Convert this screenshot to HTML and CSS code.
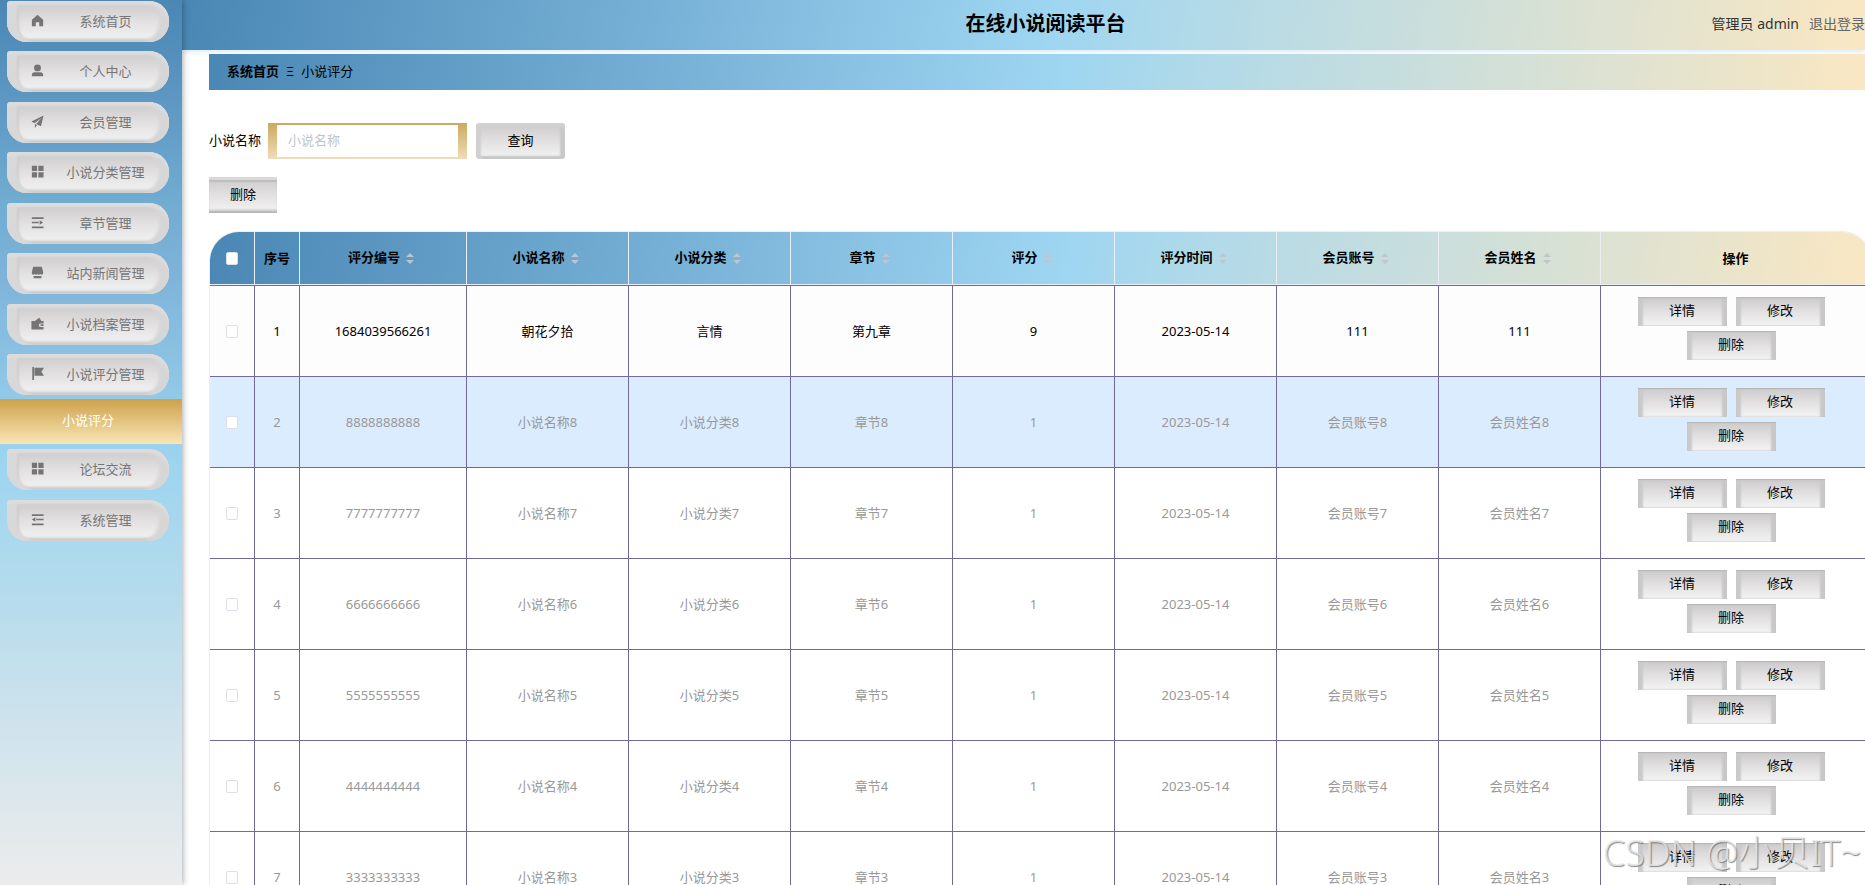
FILE: index.html
```html
<!DOCTYPE html>
<html lang="zh-CN">
<head>
<meta charset="utf-8">
<title>在线小说阅读平台</title>
<link rel="stylesheet" href="styles.css">
</head>
<body>
<div class="app">
  <nav class="sidebar" id="menu"></nav>
  <div class="main">
    <header class="topbar">
      <h1>在线小说阅读平台</h1>
      <div class="user"><span>管理员 admin</span><a href="#">退出登录</a></div>
    </header>
    <main class="content">
      <div class="crumbs"><a href="#">系统首页</a><span class="sep">Ξ</span><span>小说评分</span></div>
      <form class="search">
        <label for="name">小说名称</label>
        <span class="field"><input id="name" type="text" placeholder="小说名称"></span>
        <button class="query" type="button">查询</button>
      </form>
      <button class="bulk" type="button">删除</button>
      <div class="grid">
        <table>
          <colgroup><col class="c-sm"><col class="c-sm"><col class="c-id"><col class="c"><col class="c"><col class="c"><col class="c"><col class="c"><col class="c"><col class="c"><col></colgroup>
          <thead><tr id="head"></tr></thead>
          <tbody id="rows"></tbody>
        </table>
      </div>
    </main>
  </div>
</div>
<div class="watermark">CSDN @小贝IT~</div>
<script src="app.js"></script>
</body>
</html>
```
FILE: app.js
```js
const icons = {
  home: '<path d="M7.500 1 1 6.500V14h4.500V9.500h4V14H14V6.500z"/>',
  user: '<circle cx="7.500" cy="4.500" r="4"/><path d="M1 14v-1.500C1 10.500 2.500 9.500 4 9.500h7c1.500 0 3 1 3 3V14z"/>',
  send: '<path d="M14.500 .5.5 7.500 4 9.500 12 3.500 6 10.500 11.500 13zM4.500 10.500 7 11.500 4.500 15z"/>',
  menu: '<path d="M1 1h6v6H1zM8.500 1h6v6h-6zM1 8.500h6v6H1zM8.500 8.500h6v6h-6z"/>',
  fold: '<path d="M1 1.500h13.500v2H1zM1 6.500h8v2H1zM1 12h13.500v2H1zM10 4.800 14 7.500 10 10.200z"/>',
  shop: '<path d="M2.500 1h10l1.500 6v2c-1 1.500-2.500 1.500-3.300.3-1 1.200-2.400 1.200-3.200 0-.8 1.200-2.200 1.200-3.200 0C3.500 10.500 2 10.500 1 9V7zM3 11.500h9V14H3z"/>',
  wallet: '<path d="M.5 4.500h4L9.500 1l2.500 3.500h2.500v3H11a2 2 0 0 0 0 4h3.500V14.500H.5zM11 8.500h3.500v2H11z"/>',
  flag: '<path d="M1.500 0h2v15h-2zM4 1h11l-3 4.500 3 4.500H4z"/>',
  list: '<path d="M1 1.500h13.500v2H1zM6 6.500h8.500v2H6zM1 12h13.500v2H1zM5 4.800 1 7.500 5 10.200z"/>'
};
const items = [['home','系统首页'],['user','个人中心'],['send','会员管理'],['menu','小说分类管理'],['fold','章节管理'],['shop','站内新闻管理'],['wallet','小说档案管理'],['flag','小说评分管理'],[null,'小说评分'],['menu','论坛交流'],['list','系统管理']];
document.getElementById('menu').innerHTML = items.map(([i, t]) => i
  ? `<button class="item" type="button"><svg viewBox="0 0 15 15" aria-hidden="true">${icons[i]}</svg><span>${t}</span></button>`
  : `<a class="sub" href="#">${t}</a>`).join('');

const sort = '<svg class="sort" viewBox="0 0 8 12" aria-hidden="true"><path d="M4 1l4 4H0zM0 8h8l-4 4z"/></svg>';
const names = ['评分编号','小说名称','小说分类','章节','评分','评分时间','会员账号','会员姓名'];
document.getElementById('head').innerHTML = '<th><input type="checkbox" aria-label="全选"></th><th>序号</th>'
  + names.map(n => `<th class="sortable">${n}${sort}</th>`).join('') + '<th>操作</th>';

const data = [['1684039566261','朝花夕拾','言情','第九章','9','2023-05-14','111','111']];
for (let k = 8; k >= 3; k--) {
  data.push([String(k).repeat(10),'小说名称'+k,'小说分类'+k,'章节'+k,'1','2023-05-14','会员账号'+k,'会员姓名'+k]);
}
const ops = '<td><div class="ops"><button type="button">详情</button><button type="button">修改</button><button type="button">删除</button></div></td>';
document.getElementById('rows').innerHTML = data.map((r, i) =>
  `<tr class="${['first','hover'][i] || ''}"><td><input type="checkbox" aria-label="选择第${i + 1}行"></td><td>${i + 1}</td>`
  + r.map(v => `<td>${v}</td>`).join('') + ops + '</tr>').join('');
```
FILE: styles.css
```css
* { box-sizing: border-box; }
body {
  margin: 0;
  height: 100vh;
  overflow: hidden;
  background: #fff;
  color: #000;
  font: 13px/20px "Noto Sans", "Noto Sans CJK SC", sans-serif;
}
button, input { font: inherit; color: inherit; }
a { color: inherit; text-decoration: none; }
.app { display: flex; height: 100vh; overflow: hidden; }

.sidebar {
  position: relative;
  z-index: 1;
  flex: none;
  display: flex;
  flex-direction: column;
  width: 182px;
  padding-top: 1px;
  background: linear-gradient(180deg, #4a87b4 0, #5b95c1 10%, #6fabd0 22%, #7cb2d8 30%, #9cd4f0 52%, #b3dbed 66%, #cfe3ec 82%, #ececec 100%);
  box-shadow: 1px 0 6px rgba(0, 21, 41, .35);
}
.item {
  flex: none;
  display: flex;
  align-items: center;
  height: 41px;
  margin: 0 13px 10px 7px;
  padding: 0 2px 2px 24px;
  border: 0;
  border-radius: 4px 20px 20px 20px;
  background: linear-gradient(180deg, #cbc9c9, #e2e0e1 50%, #f4f4f4);
  box-shadow: inset 0 4px 2px #dcdcdc, inset 10px 0 2px #d8d8d8, inset -10px 0 3px #d6d6d6, inset 0 -3px 3px #c4c4c4, inset 12px 4px 2px #cfcfcf;
  color: #757575;
}
.item:nth-child(odd) { margin-bottom: 9px; }
.item svg { flex: none; width: 13px; height: 13px; fill: #757575; }
.item span { flex: 1; text-align: center; }
.sub {
  flex: none;
  height: 45px;
  margin: -6px 0 5px;
  padding-right: 6px;
  background: linear-gradient(180deg, #cda14a, #fae6b6);
  color: #fff;
  line-height: 43px;
  text-align: center;
}

.main { flex: 1; min-width: 0; }
.topbar, .crumbs, thead {
  background: linear-gradient(100deg, #4a87b4 0, #75afd5 27%, #9dd5f1 51%, #b3dae8 61%, #fae7c2 100%);
}
.topbar {
  display: grid;
  grid-template-columns: 1fr auto 1fr;
  align-items: center;
  height: 50px;
  padding: 0 0 2px 44px;
  box-shadow: 0 1px 6px #cfe6f8;
}
.topbar h1 { grid-column: 2; margin: 0; font-size: 20px; line-height: 28px; }
.user { display: flex; gap: 10px; justify-content: flex-end; color: #333; font-size: 14px; white-space: nowrap; }
.user a { color: #666; }

.content { padding: 4px 0 0 27px; }
.crumbs {
  display: flex;
  align-items: center;
  gap: 7px;
  height: 36px;
  padding: 0 0 2px 18px;
}
.crumbs a { font-weight: 700; }
.search { display: flex; align-items: center; height: 36px; margin-top: 33px; }
.search label { padding-bottom: 2px; }
.field {
  width: 199px;
  height: 36px;
  margin: 0 9px 0 7px;
  padding: 2px 9px;
  background: linear-gradient(180deg, #cba95d, #f0ddb8);
}
.field input { display: block; width: 100%; height: 32px; padding: 0 11px 2px; border: 0; background: #fff; outline: 0; }
.field input::placeholder { color: #c0c4cc; opacity: 1; }
.query, .bulk, .ops button {
  padding: 0 0 2px;
  border: 0;
  background: linear-gradient(180deg, #cbc9c9, #e2e0e1 50%, #f4f4f4);
}
.query {
  width: 89px;
  height: 36px;
  border-radius: 4px;
  box-shadow: inset 0 4px 2px #d2d2d2, inset 5px 0 2px #d0d0d0, inset -5px 0 2px #c8c8c8, inset 0 -3px 2px #c4c4c4;
}
.bulk {
  display: block;
  width: 68px;
  height: 36px;
  margin: 18px 0;
  box-shadow: inset 0 3px 0 #d9d9d9, inset 0 5px 1px #bdbdbd, inset 0 -2px 0 #b9b9b9, inset 0 -4px 1px #d8d8d8;
}

.grid {
  margin-right: -7px;
  border: 1px solid #ebeef5;
  border-radius: 30px 30px 0 0;
  overflow: hidden;
}
table { width: 100%; border-collapse: separate; border-spacing: 0; table-layout: fixed; }
.c-sm { width: 45px; }
.c-id { width: 167px; }
.c { width: 162px; }
th, td { padding: 0; text-align: center; border-right: 1px solid #706a9c; border-bottom: 1px solid #706a9c; }
th { height: 53px; border-color: #ebeef5; font-weight: 700; }
.sortable { padding: 0 4px 2px 0; }
tbody tr:first-child td { border-top: 1px solid #706a9c; }
td { height: 91px; color: #999; }
.first td { height: 92px; color: #000; background: #fdfdfe; }
.hover td { background: #dbecff; }
.sort { width: 8px; height: 12px; margin-left: 6px; vertical-align: -2px; fill: #c0c4cc; }
table input {
  appearance: none;
  display: block;
  width: 12px;
  height: 13px;
  margin: 0 auto;
  border: 1px solid #dcdfe6;
  border-radius: 2px;
  background: #fff;
}
.ops { display: flex; flex-wrap: wrap; justify-content: center; gap: 5px 9px; width: 196px; margin: -6px auto 0; padding-right: 9px; box-sizing: content-box; }
.ops button {
  width: 89px;
  height: 29px;
  padding-bottom: 3px;
  color: #000;
  box-shadow: inset 0 1px 1px #b5b5b5, inset 5px 0 2px #cacaca, inset -5px 0 2px #c8c8c8;
}

.watermark {
  position: absolute;
  right: 4px;
  bottom: 12px;
  color: rgba(235, 235, 235, .8);
  font-size: 36px;
  font-weight: 300;
  line-height: 40px;
  text-shadow: 1px 1px 1px rgba(110, 110, 110, .8);
  pointer-events: none;
}
```
